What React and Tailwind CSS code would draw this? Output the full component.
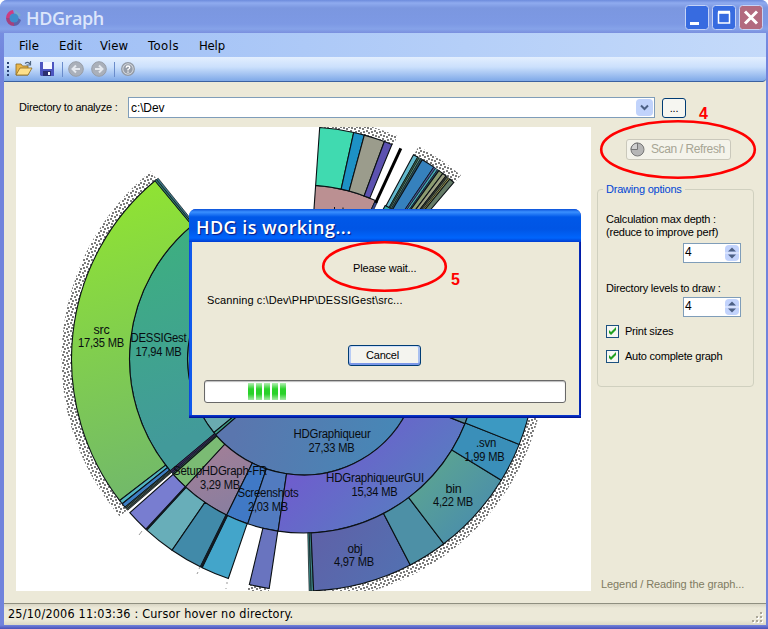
import React from 'react';

const CX = 303.5;
const CY = 359;
const pt = (r, deg) => {
  const a = (deg * Math.PI) / 180;
  return `${(CX + r * Math.cos(a)).toFixed(2)} ${(CY + r * Math.sin(a)).toFixed(2)}`;
};
// Ring sector between radii r0..r1 and angles a0..a1 (clockwise degrees)
const sector = (r0, r1, a0, a1) => {
  const big = a1 - a0 > 180 ? 1 : 0;
  return `M${pt(r1, a0)}A${r1} ${r1} 0 ${big} 1 ${pt(r1, a1)}L${pt(r0, a1)}A${r0} ${r0} 0 ${big} 0 ${pt(r0, a0)}Z`;
};

const hatches = [
  [139.4, 230.8], [-86, -67.2], [-61.6, -49.4], [98.5, 103.6], [0, 87.4],
];

const level2 = [
  [152, 232, '#459a90'], [140.6, 152, '#6aabb0'], [139.2, 140.6, '#3f9f86'], [0, 139.2, 'url(#hd)'],
];
const level3 = [
  [140, 231, 'url(#dess)'], [139.4, 140, '#3a2a60'], [138.9, 139.4, '#3b2c6c'], [138.4, 138.9, '#2f5a50'],
  [132.7, 138.4, '#7bbb74'], [116.2, 132.7, 'url(#setup)'], [108.7, 116.2, '#4079c6'],
  [98.4, 108.7, '#527bc0'], [21.8, 98.4, 'url(#gui)'], [5, 21.8, '#5b8a9b'],
  [-86, -65.6, '#bb9092'], [-65.6, -64.8, '#3a4790'], [-62, -49.6, '#35a8a8'],
];
const level4 = [
  [142.4, 230.2, 'url(#src)'], [230.2, 230.7, '#2f7a6c'], [230.7, 231.2, '#3c7a8a'],
  [141.4, 142.4, '#52b5c2'], [140.3, 141.4, '#3d7fc4'], [140, 140.3, '#44625a'], [139.7, 140, '#6a8f76'], [139.3, 139.7, '#3a4a44'],
  [132.8, 138.5, '#787dd0'], [124.5, 132.5, '#68aeb9'], [116.4, 124.5, '#418aa9'], [115.9, 116.4, '#26546a'],
  [108.9, 115.9, '#43a5ca'], [98.5, 103.5, '#6974bf'], [88.1, 88.6, '#3f8f8c'], [87.5, 88.1, '#418a8a'],
  [62.6, 87.5, 'url(#obj)'], [52.8, 62.6, '#4d90a6'], [31.5, 52.8, 'url(#bin)'], [21.6, 31.5, '#3a8fb9'], [0, 21.6, '#3c99c2'],
  [-86, -77.5, '#40dab0'], [-77.5, -74.8, '#1d91c5'], [-74.8, -69.6, '#9b9c8c'], [-69.6, -67.6, '#5c52b0'],
  [-61.7, -60.5, '#62b9cd'], [-60.5, -60.1, '#3f7350'], [-60.1, -59.7, '#67a58a'], [-59.7, -59.2, '#2b5560'],
  [-59.2, -55.8, '#3681bd'], [-55.8, -55.3, '#4a5ca0'], [-55.3, -54.7, '#45a7b5'], [-54.7, -54.3, '#294d70'],
  [-54.3, -53.1, '#8b9b70'], [-53.1, -52.1, '#9ca083'], [-52.1, -51.7, '#333830'], [-51.7, -51.3, '#77805a'],
  [-51.3, -50.9, '#b1a94f'], [-50.9, -49.6, '#657c68'],
];

const labels = [
  ['src', 101.5, 334, 16], ['17,35 MB', 101, 347, 46],
  ['DESSIGest', 158.5, 342, 56], ['17,94 MB', 158.5, 356, 46],
  ['HDGraphiqueur', 332, 438, 77], ['27,33 MB', 331.5, 452, 46],
  ['HDGraphiqueurGUI', 375, 482, 98], ['15,34 MB', 374.5, 496, 46],
  ['SetupHDGraph-FR', 220, 475, 94], ['3,29 MB', 220, 489, 40],
  ['Screenshots', 268, 497, 61], ['2,03 MB', 268, 511, 40],
  ['obj', 355, 553, 15], ['4,97 MB', 354, 566, 40],
  ['bin', 453.5, 493, 16], ['4,22 MB', 453, 506, 40],
  ['.svn', 486, 447, 20], ['1,99 MB', 484.5, 461, 40],
];

const Grad = ({ id, from, to, p }) => (
  <linearGradient id={id} gradientUnits="userSpaceOnUse" x1={p[0]} y1={p[1]} x2={p[2]} y2={p[3]}>
    <stop offset="0" stopColor={from} />
    <stop offset="1" stopColor={to} />
  </linearGradient>
);

const Ring = ({ r0, r1, items }) =>
  items.map(([a0, a1, fill], i) => (
    <path key={i} d={sector(r0, r1, a0, a1)} fill={fill} strokeWidth={a1 - a0 < 1 ? 0.7 : 1.1} />
  ));

function Graph() {
  return (
    <svg className="block bg-white" width="575" height="464" viewBox="16 127 575 464" fontFamily='"Liberation Sans", Arial, sans-serif'>
      <defs>
        <Grad id="src" from="#8fe234" to="#72b96a" p={[110, 200, 190, 480]} />
        <Grad id="dess" from="#3db07f" to="#429a9a" p={[150, 230, 210, 430]} />
        <Grad id="hd" from="#5a76ae" to="#4787b6" p={[240, 410, 390, 450]} />
        <Grad id="gui" from="#6f5cce" to="#567fc0" p={[320, 440, 410, 530]} />
        <Grad id="setup" from="#a57f96" to="#8a7e9f" p={[200, 440, 230, 510]} />
        <Grad id="obj" from="#5e62a8" to="#5271b2" p={[320, 530, 400, 590]} />
        <Grad id="bin" from="#5aa294" to="#4b8faa" p={[430, 470, 480, 520]} />
        <pattern id="dots" width="8" height="8" patternUnits="userSpaceOnUse">
          <rect width="8" height="8" fill="#fff" />
          <path
            d="M0 0h1v1h-1zM2 0h2v2h-2zM7 0h1v1h-1zM6 2h2v2h-2zM3 3h2v2h-2zM0 4h2v2h-2zM4 6h2v2h-2zM0 7h1v1h-1zM7 7h1v1h-1z"
            fill="#7c7c7c"
            shapeRendering="crispEdges"
          />
        </pattern>
      </defs>
      {hatches.map((h, i) => <path key={i} d={sector(232, 242, h[0], h[1])} fill="url(#dots)" />)}
      <g stroke="#0a1014">
        <Ring r0={58} r1={116} items={level2} />
        <Ring r0={116} r1={174} items={level3} />
        <Ring r0={174} r1={232} items={level4} />
      </g>
      <path d={`M${pt(172, -65.2)}L${pt(232, -65.2)}`} stroke="#000" strokeWidth="3" />
      <path d={`M${pt(174, 132.6)}L${pt(232, 132.6)}M${pt(174, 116.1)}L${pt(232, 116.1)}`} stroke="#111820" strokeWidth="2" />
      <path d="M139 535l3-4M197 574l1-2M199 569l1-2M226 588v1M227 582v2" stroke="#999" strokeWidth="1" />
      <path d="M334.500 209v-2M343 209v-1.500" stroke="#111" strokeWidth="1" />
      <g fontSize="12" textAnchor="middle" fill="#080c10">
        {labels.map(([t, x, y, w], i) => (
          <text key={i} x={x} y={y} textLength={w} lengthAdjust="spacingAndGlyphs">{t}</text>
        ))}
      </g>
    </svg>
  );
}

function Spinner() {
  return (
    <div className="-ml-[8px] pl-[85px]">
      <div className="flex h-[20px] w-[58px] border border-[#7f9db9] bg-white p-px">
        <span className="flex-1 text-[12px] leading-[15px]">4</span>
        <span className="flex w-[14px] flex-col items-center justify-center rounded-sm bg-[#c2d3fc]">
          <svg width="14" height="16" viewBox="0 0 14 16">
            <path d="M0 8h14" stroke="#eaf0ff" />
            <path d="M3 6.500L7 2.500L11 6.500zM3 9.500L7 13.500L11 9.500z" fill="#4d6185" />
          </svg>
        </span>
      </div>
    </div>
  );
}

function Check({ children, className }) {
  return (
    <div className={`flex h-[13px] items-center gap-[6px] ${className}`}>
      <svg width="13" height="13" viewBox="0 0 13 13">
        <rect x=".5" y=".5" width="12" height="12" fill="#f6f6f2" stroke="#1c5180" />
        <path d="M3 5v3l2 2 5-5V2L5 7z" fill="#21a121" />
      </svg>
      {children}
    </div>
  );
}

const Sep = () => <span className="h-[15px] w-px bg-[#6a8ccb]" />;

export default function App() {
  return (
    <div className="relative h-[629px] w-[768px] overflow-hidden bg-white font-['Liberation_Sans',Arial,sans-serif] text-[11px] tracking-[-0.22px] text-black">
      <div className="flex h-full flex-col rounded-t-[7px] bg-[linear-gradient(#7d9be6,#7183dc_60px,#7183dc)]">
        <header className="flex h-[33px] items-center rounded-t-[7px] bg-[linear-gradient(#6d8bdc,#8fabef_3px,#7b97e0_8px,#7d99e4_24px,#86a3e9_29px,#7a8fde)] pt-[3px] pr-[5px] pl-[5px]">
          <svg width="18" height="18" viewBox="0 0 18 18">
            <path d="M8 1A8 8 0 0 0 1 9l4 0a4 4 0 0 1 4-4z" fill="#cf3c80" />
            <path d="M1 9a8 8 0 0 0 8 8V13a4 4 0 0 1-4-4z" fill="#a3417e" />
            <path d="M9 17a8 8 0 0 0 7-6l-3-2a4 4 0 0 1-4 4z" fill="#5c62a9" />
            <path d="M10 1l6 5-2 2-4-3z" fill="#7ba9cc" />
            <circle cx="9" cy="9" r="4.500" fill="#3f8ccb" />
          </svg>
          <span className="ml-[3px] flex-1 font-['Open_Sans',sans-serif] text-[18px] font-semibold tracking-[-0.4px] text-[#dce6fb]">HDGraph</span>
          <svg width="78" height="26" viewBox="0 0 78 26">
            <g stroke="#c5d3f7">
              <rect x=".5" y=".5" width="23" height="24" rx="3" fill="#376be0" />
              <rect x="27.500" y=".5" width="23" height="24" rx="3" fill="#376be0" />
              <rect x="54.500" y=".5" width="23" height="24" rx="3" fill="#b26a7f" />
            </g>
            <path d="M5 17h9v3H5z" fill="#fff" />
            <path d="M33.500 8h11v10h-11z" fill="none" stroke="#fff" strokeWidth="1.500" />
            <path d="M33 7h12" stroke="#fff" strokeWidth="2.500" />
            <path d="M60 6.500l12 12M72 6.500l-12 12" stroke="#fff" strokeWidth="3" />
          </svg>
        </header>

        <div className="mr-[2px] ml-[4px] flex min-h-0 flex-1 flex-col bg-[#ece9d8]">
          <nav className="flex h-[24px] items-center bg-[linear-gradient(90deg,#9ebef5,#c4dafa)] pt-[2px] pl-[15px] font-['DejaVu_Sans_Condensed','DejaVu_Sans',sans-serif] text-[13px] tracking-[0.15px]">
            <span className="w-[40px]">File</span>
            <span className="w-[41px]">Edit</span>
            <span className="w-[48px]">View</span>
            <span className="w-[51px] tracking-[0.5px]">Tools</span>
            <span className="tracking-[-0.2px]">Help</span>
          </nav>
          <div className="flex h-[25px] items-center rounded-br-[4px] border-b border-[#3b61a0] bg-[linear-gradient(#e3effe,#cbe0fc_10px,#7fa9e8)] pl-[3px]">
            <svg width="2" height="15" viewBox="0 0 2 15"><path d="M1 0v15" stroke="#274176" strokeWidth="2" strokeDasharray="2 2" /></svg>
            <svg className="ml-[6px]" width="18" height="16" viewBox="0 0 18 16">
              <path d="M1 14V3h5l1.500 2H13v9z" fill="#e9b64c" stroke="#8a6a20" strokeWidth=".8" />
              <path d="M1 14l4-7h12l-4 7z" fill="#ffe08a" stroke="#8a6a20" strokeWidth=".8" />
              <path d="M10 2.500q3-2.500 5 .5M15.500 0v4h-4" fill="none" stroke="#4f6680" strokeWidth="1.200" />
            </svg>
            <svg className="ml-[7px]" width="14" height="14" viewBox="0 0 14 14">
              <path d="M0 0h14v14H1l-1-1z" fill="#4c55c0" />
              <path d="M3 0h9v7H3z" fill="#f5f8ff" />
              <path d="M3 9h8v5H3z" fill="#2c2f70" />
              <path d="M8 10h2v3H8z" fill="#fff" />
            </svg>
            <span className="ml-[8px] flex"><Sep /></span>
            {[0, 180].map((r) => (
              <svg key={r} className={r ? 'ml-[7px]' : 'ml-[5px]'} width="16" height="16" viewBox="0 0 16 16">
                <circle cx="8" cy="8" r="7.300" fill="#aab0ba" stroke="#979da7" />
                <g transform={`rotate(${r} 8 8)`}>
                  <path d="M12 8H5M8 4.500L4.500 8L8 11.500" fill="none" stroke="#e4e8ee" strokeWidth="2" />
                </g>
              </svg>
            ))}
            <span className="ml-[7px] flex"><Sep /></span>
            <svg className="ml-[6px]" width="14" height="14" viewBox="0 0 14 14">
              <circle cx="7" cy="7" r="6.300" fill="#d5d9df" stroke="#9299a3" strokeWidth="1.300" />
              <circle cx="7" cy="7" r="4.700" fill="#979ea9" />
              <path d="M5.200 5.800q0-1.800 1.800-1.800t1.800 1.500q0 1-1.800 2V8.500M7 9.500v1.300" fill="none" stroke="#fff" strokeWidth="1.300" />
            </svg>
          </div>

          <div className="mt-[15px] flex h-[21px] items-center pl-[15px]">
            <span className="w-[109px]">Directory to analyze :</span>
            <div className="flex h-[21px] w-[527px] items-center justify-between border border-[#7f9db9] bg-white pl-[2px] pr-[1px]">
              <span className="text-[12px] tracking-[-0.1px]">c:\Dev</span>
              <span className="flex h-[17px] w-[17px] items-center justify-center rounded-sm bg-[#c1d3fb]">
                <svg width="9" height="7" viewBox="0 0 9 7"><path d="M1 1.500l3.500 3.500L8 1.500" fill="none" stroke="#4d6185" strokeWidth="2" /></svg>
              </span>
            </div>
            <button className="ml-[7px] h-[20px] w-[24px] rounded-[3px] border border-[#003c74] bg-[#f6f6f1] leading-[16px]">...</button>
          </div>

          <main className="mt-[9px] flex pl-[12px]">
            <Graph />
            <aside className="flex h-[464px] w-[170px] flex-col pl-[6px]">
              <button className="mt-[12px] ml-[29px] flex h-[21px] w-[105px] shrink-0 items-center rounded-[3px] border border-[#cac8bb] bg-[#f4f3ea] pl-[3px] text-[#a7a594]">
                <svg className="shrink-0" width="15" height="15" viewBox="0 0 15 15">
                  <circle cx="7.500" cy="7.500" r="6.500" fill="#b6b6b6" stroke="#777" />
                  <path d="M7.500 1v6.500H1A6.500 6.500 0 0 1 7.500 1z" fill="#d0d0d0" stroke="#777" />
                </svg>
                <span className="ml-[6px] text-[12px] leading-[15px] tracking-[-0.4px] whitespace-nowrap">Scan / Refresh</span>
              </button>
              <fieldset className="mt-[22px] h-[205px] w-[157px] rounded-[4px] border border-[#d0d0bf] pl-[8px]">
                <legend className="-ml-[3px] px-[3px] leading-[14px] text-[#0046d5]">Drawing options</legend>
                <p className="mt-[17px] leading-[13px] whitespace-nowrap">Calculation max depth :<br />(reduce to improve perf)</p>
                <div className="mt-[4px]"><Spinner /></div>
                <p className="mt-[19px] leading-[13px]">Directory levels to draw :</p>
                <div className="mt-[2px]"><Spinner /></div>
                <Check className="mt-[8px]">Print sizes</Check>
                <Check className="mt-[12px]">Auto complete graph</Check>
              </fieldset>
              <span className="mt-auto ml-[4px] leading-[14px] tracking-[-0.08px] text-[#807b62]">Legend / Reading the graph...</span>
            </aside>
          </main>

          <footer className="mt-auto flex h-[22px] items-center justify-between border-t border-[#8f8f80] bg-[linear-gradient(#d8d5c4,#ece9d8_4px,#ece9d8_16px,#dbd8c6)] pr-[3px] pl-[4px] font-['DejaVu_Sans_Condensed','DejaVu_Sans',sans-serif] text-[12.500px] tracking-[0.2px]">
            <span>25/10/2006 11:03:36 : Cursor hover no directory.</span>
            <svg className="mt-[6px]" width="11" height="11" viewBox="0 0 11 11">
              <path d="M9 1h2v2H9zM5 5h2v2H5zM9 5h2v2H9zM1 9h2v2H1zM5 9h2v2H5zM9 9h2v2H9z" fill="#fff" />
              <path d="M8 0h2v2H8zM4 4h2v2H4zM8 4h2v2H8zM0 8h2v2H0zM4 8h2v2H4zM8 8h2v2H8z" fill="#aaa697" />
            </svg>
          </footer>
        </div>
        <div className="h-[4px] bg-[linear-gradient(#7183dc,#4a50b8)]" />
      </div>

      <section className="absolute top-[209px] left-[189px] flex h-[209px] w-[392px] flex-col rounded-t-[7px] bg-[linear-gradient(90deg,#0a3fd8,#1264f5_2px,#0a3cd0_4px,#0a3cd0_389px,#0016a0)] pr-[2px] pl-[3px]">
        <h1 className="-mr-[2px] -ml-[3px] flex h-[33px] items-center rounded-t-[7px] bg-[linear-gradient(#0a50d8,#3a90ff_3px,#0058e8_8px,#0055e5_20px,#0065fc_29px,#003cd0)] pt-[3px] pl-[7px] font-['Open_Sans',sans-serif] text-[18px] font-semibold tracking-[0.45px] text-white [text-shadow:1px_1px_1px_#0a1883]">HDG is working...</h1>
        <div className="flex flex-1 flex-col bg-[#ece9d8]">
          <p className="mt-[19px] ml-[161px] leading-[14px] tracking-[-0.15px]">Please wait...</p>
          <p className="mt-[18px] ml-[15px] leading-[14px] tracking-[0.1px]">Scanning c:\Dev\PHP\DESSIGest\src...</p>
          <button className="mt-[38px] ml-[156px] h-[21px] w-[73px] rounded-[3px] border border-[#003c74] bg-[#f4f4ef] pr-[4px] leading-[17px] shadow-[inset_0_-2px_0_#7b97e8,inset_2px_0_0_#b8ccf5,inset_-2px_0_0_#a9c0f0,inset_0_1px_0_#cfe0fc]">Cancel</button>
          <div className="mt-[14px] ml-[12px] flex h-[23px] w-[362px] items-center gap-[2px] rounded-[3px] border border-[#686868] bg-white pl-[43px] shadow-[inset_0_1px_1px_#bbb]">
            {[0, 1, 2, 3, 4].map((i) => (
              <span key={i} className="h-[17px] w-[6px] bg-[linear-gradient(#b5efb5,#2ad22a_6px,#2ad22a_11px,#a5eaa5)]" />
            ))}
          </div>
        </div>
        <div className="-mr-[2px] -ml-[3px] h-[3px] bg-[linear-gradient(#0a3cd8,#00108c)]" />
      </section>

      <svg className="pointer-events-none absolute inset-0" width="768" height="629" viewBox="0 0 768 629" fontFamily='"Liberation Sans", Arial, sans-serif' fontSize="16" fontWeight="700" fill="#f00">
        <ellipse cx="678" cy="149.500" rx="76.800" ry="28.300" fill="none" stroke="#f00" strokeWidth="2.600" />
        <ellipse cx="384.500" cy="266.500" rx="61.300" ry="24.300" fill="none" stroke="#f00" strokeWidth="2.600" />
        <text x="699" y="119">4</text>
        <text x="451" y="285">5</text>
      </svg>
    </div>
  );
}
